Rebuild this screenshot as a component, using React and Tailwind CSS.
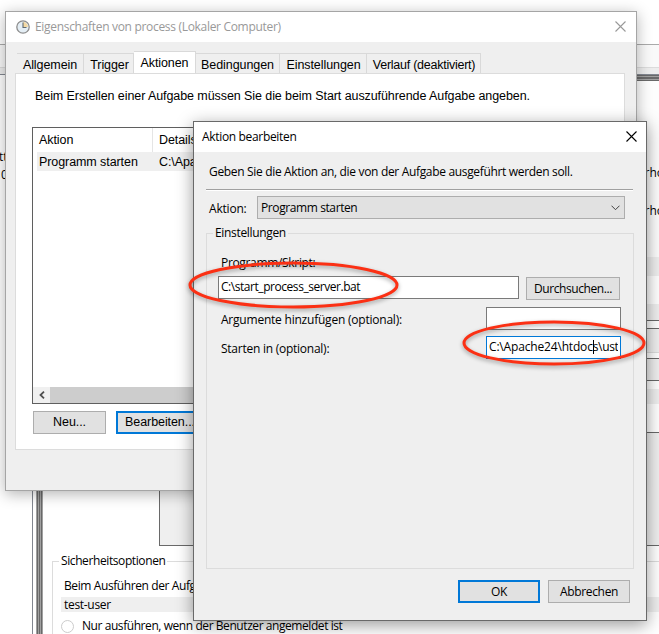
import React from 'react'

const segoe = 'font-["Open_Sans","Noto_Sans",sans-serif]'
const msSans = 'font-["Liberation_Sans",Arial,sans-serif]'

function CloseIcon({ className }) {
  return (
    <svg width="11" height="11" viewBox="0 0 11 11" className={className} fill="none" stroke="currentColor" strokeWidth="1.1">
      <path d="M0.5 0.5 L10.5 10.5 M10.5 0.5 L0.5 10.5" />
    </svg>
  )
}

function ClockIcon() {
  return (
    <svg width="14" height="14" viewBox="0 0 14 14">
      <circle cx="7" cy="7" r="6.2" fill="#e4eef5" stroke="#8d8d8d" strokeWidth="1.3" />
      <path d="M7 7 V2 A5 5 0 0 1 12 7 Z" fill="#f3d9a4" />
      <path d="M7 2.6 V7.5 H10.5" fill="none" stroke="#5e6a72" strokeWidth="1.1" />
    </svg>
  )
}

// hand-drawn style marker round a field
function Marker({ className, rx, ry }) {
  return (
    <svg className={className} width={rx * 2 + 12} height={ry * 2 + 12}>
      <ellipse cx={rx + 6} cy={ry + 6} rx={rx} ry={ry} fill="none" stroke="#fb3014" strokeWidth="3" />
    </svg>
  )
}

function Button({ children, className }) {
  return <button className={`flex items-center justify-center whitespace-nowrap bg-[#e1e1e1] ${className}`}>{children}</button>
}

function Background() {
  return (
    <div className="flex h-full w-full flex-col bg-white">
      <div className="h-[44px] shrink-0" />
      <div className="h-[24px] shrink-0 border-y border-t-[#aaaaaa] border-b-[#dcdcdc] bg-[#f9f9f9]" />
      <div className="h-[7px] shrink-0 border-b border-[#828790] bg-[#ededed]" />
      <div className="flex min-h-0 flex-1">
        <div className={`w-[33px] shrink-0 border-r border-[#828790] pt-[73px] text-[12px] leading-[18px] ${segoe}`}>
          <div className="-ml-px">tt</div>
          <div className="ml-px">0</div>
        </div>
        <div className="ml-[3px] flex w-[7px] shrink-0 justify-between bg-[#a0a0a0] px-px">
          <span className="w-px bg-[#696969]" />
          <span className="w-px bg-[#696969]" />
          <span className="w-px bg-[#696969]" />
        </div>
        <div className={`flex min-w-0 flex-1 flex-col text-[12px] ${segoe}`}>
          <div className="flex h-[6px] shrink-0 flex-col justify-between bg-[#696969] py-px">
            <span className="h-px bg-[#a0a0a0]" />
            <span className="h-px bg-[#a0a0a0]" />
          </div>
          <div className="flex h-[176px] shrink-0 flex-col items-end overflow-hidden bg-[#fdfdfd] pt-[73px] leading-[38px]">
            <span className="-mr-[5px] h-[38px]">rho</span>
            <span className="-mr-[5px]">rho</span>
          </div>
          <div className="h-[19px] shrink-0 bg-[#efefef]" />
          <div className="mt-[28px] h-[17px] shrink-0 border-b border-[#696969] bg-[#efefef]" />
          <div className="mt-[7px] h-[25px] shrink-0 border-y border-t-[#696969] border-b-[#dcdcdc] bg-[#efefef]" />
          <div className="mt-[5px] h-[23px] shrink-0 border-y border-[#696969] bg-[#efefef]" />
          <div className="mt-[8px] h-[15px] shrink-0 bg-[#efefef]" />
          <div className="mt-[28px] ml-[116px] h-[114px] shrink-0 border-y border-l border-[#696969] bg-[#efefef]" />
          <fieldset className="mt-[6px] -mr-2 ml-[9px] h-[100px] shrink-0 border border-[#dcdcdc]">
            <legend className="ml-[6px] h-[18px] px-[2px] leading-[18px] tracking-[-0.4px]">Sicherheitsoptionen</legend>
            <div className="mt-[7px] ml-[11px] leading-[18px] tracking-[-0.4px]">Beim Ausführen der Aufgabe</div>
            <div className="mt-[2px] ml-[8px] h-[15px] bg-[#efefef] pl-[3px] leading-[15px] tracking-[-0.3px]">test-user</div>
            <div className="mt-[5px] ml-[8px] flex h-[18px] items-center gap-2 tracking-[-0.43px]">
              <span className="size-[13px] rounded-full border border-[#cccccc]" />
              <span>Nur ausführen, wenn der Benutzer angemeldet ist</span>
            </div>
          </fieldset>
        </div>
      </div>
    </div>
  )
}

function PropertiesWindow() {
  const tab = 'flex h-[20px] items-center justify-center border border-b-0 border-l-0 border-[#d9d9d9] pt-[3px] whitespace-nowrap'
  return (
    <div className={`absolute top-[11px] left-[5px] flex h-[480px] w-[632px] flex-col border border-[#a5a5a5] bg-[#efefef] text-[12.5px] tracking-[-0.08px] shadow-[0_3px_14px_rgba(0,0,0,0.3)] ${msSans}`}>
      <div className="flex h-[30px] shrink-0 items-center bg-white pr-[10px] pl-[10px]">
        <ClockIcon />
        <span className={`ml-[5px] flex-1 text-[12px] tracking-[-0.31px] text-[#999999] ${segoe}`}>Eigenschaften von process (Lokaler Computer)</span>
        <CloseIcon className="mb-[2px] text-[#999999]" />
      </div>
      <div className="mx-[9px] mt-[9px] flex h-[22px] shrink-0 items-end pl-[2px]">
        <div className={`${tab} w-[67px] border-l`}>Allgemein</div>
        <div className={`${tab} w-[50px] pl-[2px]`}>Trigger</div>
        <div className="-mb-px flex h-[23px] w-[62px] items-center justify-center border border-b-0 border-l-0 border-[#d9d9d9] bg-white">Aktionen</div>
        <div className={`${tab} w-[84px]`}>Bedingungen</div>
        <div className={`${tab} w-[87px] pl-px`}>Einstellungen</div>
        <div className={`${tab} w-[114px] pl-px tracking-[-0.25px]`}>Verlauf (deaktiviert)</div>
      </div>
      <div className="mx-[9px] flex h-[377px] w-[610px] shrink-0 flex-col border border-[#dcdcdc] bg-white px-[16px] pt-[13px]">
        <div className="ml-[3px] h-[18px] leading-[18px] whitespace-nowrap">Beim Erstellen einer Aufgabe müssen Sie die beim Start auszuführende Aufgabe angeben.</div>
        <div className="mt-[22px] flex h-[277px] shrink-0 flex-col border border-[#5f5f5f]">
          <div className="flex h-[24px] leading-[25px]">
            <span className="w-[120px] border-r border-[#e5e5e5] pl-[6px]">Aktion</span>
            <span className="pl-[6px]">Details</span>
          </div>
          <div className="ml-[4px] flex h-[19px] bg-[#efefef] leading-[21px]">
            <span className="w-[116px] pl-[2px]">Programm starten</span>
            <span className="pl-[6px]">C:\Apa</span>
          </div>
          <div className="mt-auto flex h-[16px] bg-[#cdcdcd]">
            <span className="flex w-[17px] items-center justify-center bg-[#f0f0f0]">
              <svg width="6" height="8" viewBox="0 0 6 8" fill="none" stroke="#505050" strokeWidth="1.8">
                <path d="M5 0.7 L1.5 4 L5 7.3" />
              </svg>
            </span>
          </div>
        </div>
        <div className="mt-[7px] ml-px flex gap-[10px]">
          <Button className="h-[23px] w-[73px] border border-[#adadad]">Neu...</Button>
          <Button className="h-[23px] w-[88px] border-2 border-[#0078d7]">Bearbeiten...</Button>
        </div>
      </div>
    </div>
  )
}

function ActionDialog() {
  return (
    <div className={`absolute top-[121px] left-[193px] flex h-[500px] w-[454px] flex-col border border-[#696969] bg-[#efefef] text-[12px] tracking-[-0.33px] shadow-[0_4px_16px_rgba(0,0,0,0.4)] ${segoe}`}>
      <div className="flex h-[30px] shrink-0 items-center justify-between bg-white pr-[9px] pl-[8px]">
        <span>Aktion bearbeiten</span>
        <CloseIcon className="mb-[2px] text-black" />
      </div>
      <div className="mr-[13px] ml-[12px] flex h-[39px] shrink-0 border-b border-white">
        <div className="w-full border-b border-[#a0a0a0] pt-[11px] pl-[3px] leading-[18px]">Geben Sie die Aktion an, die von der Aufgabe ausgeführt werden soll.</div>
      </div>
      <div className="mt-[5px] ml-[15px] flex shrink-0 items-center">
        <span className="w-[48px] pt-[2px] tracking-[-0.2px]">Aktion:</span>
        <div className="flex h-[23px] w-[368px] items-center justify-between border border-[#adadad] bg-[#e1e1e1] pr-[4px] pl-[3px]">
          <span className="tracking-[-0.4px]">Programm starten</span>
          <svg width="9" height="6" viewBox="0 0 9 6" fill="none" stroke="#404040">
            <path d="M0.5 0.7 L4.5 4.7 L8.5 0.7" />
          </svg>
        </div>
      </div>
      <fieldset className="mt-[5px] ml-[12px] h-[345px] w-[428px] shrink-0 border border-[#dcdcdc]">
        <legend className="ml-[6px] h-[18px] px-[2px] leading-[18px]">Einstellungen</legend>
        <div className="mt-[12px] ml-[14px] h-[18px] leading-[18px]">Programm/Skript:</div>
        <div className="mt-[4px] ml-[11px] flex">
          <div className="h-[23px] w-[301px] border border-[#7a7a7a] bg-white pl-[2px] leading-[20px] tracking-[-0.45px]">C:\start_process_server.bat</div>
          <Button className="mt-px ml-[7px] h-[23px] w-[94px] border border-[#adadad] tracking-[-0.43px]">Durchsuchen...</Button>
        </div>
        <div className="mt-[7px] ml-[14px] flex h-[23px]">
          <span className="w-[265px] pt-[4px] leading-[18px] tracking-[-0.22px]">Argumente hinzufügen (optional):</span>
          <div className="h-[23px] w-[135px] border border-[#7a7a7a] bg-white" />
        </div>
        <div className="mt-[6px] ml-[14px] flex h-[23px]">
          <span className="w-[265px] pt-[4px] leading-[18px] tracking-[-0.25px]">Starten in (optional):</span>
          <div className="h-[23px] w-[135px] border border-[#0078d7] bg-white px-[2px]">
            <div className="overflow-hidden leading-[20px] tracking-[-0.17px] whitespace-nowrap">
              C:\Apache24\htdoc<span className="-mr-px inline-block h-[14px] w-px bg-black align-[-3px]" /><span className="tracking-[-0.35px]">s\ust</span>
            </div>
          </div>
        </div>
      </fieldset>
      <div className="mt-[11px] flex gap-[8px] pl-[264px]">
        <Button className="h-[23px] w-[82px] border-2 border-[#0078d7]">OK</Button>
        <Button className="h-[23px] w-[82px] border border-[#adadad]">Abbrechen</Button>
      </div>
      <Marker rx={103.5} ry={22} className="absolute top-[135px] left-[-10px] drop-shadow-[0_2px_2px_rgba(0,0,0,0.35)]" />
      <Marker rx={90} ry={21} className="absolute top-[194px] left-[264px] drop-shadow-[0_2px_2px_rgba(0,0,0,0.35)]" />
    </div>
  )
}

export default function App() {
  return (
    <div className="relative h-[634px] w-[659px] overflow-hidden text-black">
      <Background />
      <PropertiesWindow />
      <ActionDialog />
    </div>
  )
}
